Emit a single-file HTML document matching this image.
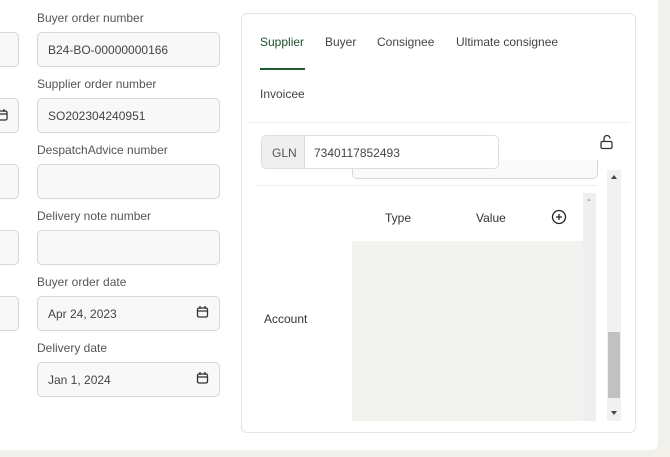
<!DOCTYPE html>
<html><head><style>
*{box-sizing:border-box;margin:0;padding:0}
body{width:670px;height:457px;background:#f1f0eb;position:relative;overflow:hidden;font-family:"Liberation Sans",sans-serif;color:#333}
.a{position:absolute}
.main{left:0;top:0;width:658px;height:450px;background:#fff;border-bottom-right-radius:6px}
.lbl{font-size:12px;color:#555;left:37px}
.inp{left:37px;width:183px;height:35px;border:1px solid #d6d6d6;border-radius:5px;background:#f8f8f8;font-size:12px;color:#444;padding:10px 0 0 10px}
.lp{left:-10px;width:29px;height:35px;border:1px solid #d6d6d6;border-radius:5px;background:#f8f8f8}
.tab{font-size:12px;color:#444;top:35px}
</style></head><body>
<div class="a main"></div>
<div class="a lp" style="top:32px"></div>
<div class="a lp" style="top:98px"></div>
<svg class="a" style="left:0;top:108px" width="10" height="14"><rect x="-3" y="3" width="10" height="9" rx="1.5" fill="none" stroke="#333" stroke-width="1.3"/><line x1="-3" y1="6" x2="7" y2="6" stroke="#333" stroke-width="1.3"/><line x1="4" y1="1" x2="4" y2="4" stroke="#333" stroke-width="1.3"/></svg>
<div class="a lp" style="top:164px"></div>
<div class="a lp" style="top:230px"></div>
<div class="a lp" style="top:296px"></div>

<div class="a lbl" style="top:11px">Buyer order number</div>
<div class="a inp" style="top:32px">B24-BO-00000000166</div>
<div class="a lbl" style="top:77px">Supplier order number</div>
<div class="a inp" style="top:98px">SO202304240951</div>
<div class="a lbl" style="top:143px">DespatchAdvice number</div>
<div class="a inp" style="top:164px"></div>
<div class="a lbl" style="top:209px">Delivery note number</div>
<div class="a inp" style="top:230px"></div>
<div class="a lbl" style="top:275px">Buyer order date</div>
<div class="a inp" style="top:296px">Apr 24, 2023</div>
<div class="a lbl" style="top:341px">Delivery date</div>
<div class="a inp" style="top:362px">Jan 1, 2024</div>
<svg class="a" style="left:196px;top:305px" width="14" height="16"><rect x="1.5" y="3" width="10" height="9" rx="1.5" fill="none" stroke="#333" stroke-width="1.3"/><line x1="1.5" y1="6" x2="11.5" y2="6" stroke="#333" stroke-width="1.3"/><line x1="4" y1="1" x2="4" y2="4" stroke="#333" stroke-width="1.3"/><line x1="9" y1="1" x2="9" y2="4" stroke="#333" stroke-width="1.3"/></svg>
<svg class="a" style="left:196px;top:371px" width="14" height="16"><rect x="1.5" y="3" width="10" height="9" rx="1.5" fill="none" stroke="#333" stroke-width="1.3"/><line x1="1.5" y1="6" x2="11.5" y2="6" stroke="#333" stroke-width="1.3"/><line x1="4" y1="1" x2="4" y2="4" stroke="#333" stroke-width="1.3"/><line x1="9" y1="1" x2="9" y2="4" stroke="#333" stroke-width="1.3"/></svg>

<div class="a" style="left:241px;top:13px;width:395px;height:420px;border:1px solid #e4e4e4;border-radius:6px"></div>
<div class="a tab" style="left:260px;color:#1f4f2c">Supplier</div>
<div class="a tab" style="left:325px">Buyer</div>
<div class="a tab" style="left:377px">Consignee</div>
<div class="a tab" style="left:456px">Ultimate consignee</div>
<div class="a" style="left:260px;top:68px;width:45px;height:2px;background:#1e5a30"></div>
<div class="a tab" style="left:260px;top:87px">Invoicee</div>
<div class="a" style="left:247px;top:122px;width:383px;height:1px;background:#eee"></div>

<div class="a" style="left:352px;top:160px;width:246px;height:19px;border:1px solid #d6d6d6;border-top:none;border-radius:0 0 5px 5px;background:#fafafa"></div>
<div class="a" style="left:261px;top:135px;width:238px;height:34px;border:1px solid #ddd;border-radius:5px;background:#fff;overflow:hidden">
<div class="a" style="left:0;top:0;width:43px;height:34px;background:#efefef;border-right:1px solid #ddd;font-size:12px;color:#555;padding:10px 0 0 10px">GLN</div>
<div class="a" style="left:52px;top:10px;font-size:12px;color:#444">7340117852493</div></div>
<svg class="a" style="left:599px;top:134px" width="16" height="16"><path d="M5 7V4.5a3 3 0 0 1 6 0" fill="none" stroke="#333" stroke-width="1.3"/><rect x="2" y="7.5" width="11" height="7" rx="1.5" fill="none" stroke="#333" stroke-width="1.3"/></svg>
<div class="a" style="left:255px;top:185px;width:343px;height:1px;background:#eee"></div>

<div class="a" style="left:607px;top:170px;width:14px;height:251px;background:#f1f1f1"></div>
<div class="a" style="left:608px;top:332px;width:12px;height:66px;background:#c1c1c1"></div>
<div class="a" style="left:611px;top:175px;width:0;height:0;border:3px solid transparent;border-bottom:4px solid #444;border-top:none"></div>
<div class="a" style="left:611px;top:411px;width:0;height:0;border:3px solid transparent;border-top:4px solid #444;border-bottom:none"></div>

<div class="a" style="left:352px;top:193px;width:244px;height:228px;background:#f2f2ee"></div>
<div class="a" style="left:352px;top:193px;width:231px;height:48px;background:#fff"></div>
<div class="a" style="left:583px;top:193px;width:13px;height:228px;background:#efefef"></div>
<div class="a" style="left:587px;top:198px;width:0;height:0;border:2.5px solid transparent;border-bottom:3px solid #bbb;border-top:none"></div>
<div class="a" style="left:385px;top:211px;font-size:12px;color:#333">Type</div>
<div class="a" style="left:476px;top:211px;font-size:12px;color:#333">Value</div>
<svg class="a" style="left:551px;top:209px" width="16" height="16"><circle cx="8" cy="8" r="6.5" fill="none" stroke="#222" stroke-width="1.3"/><path d="M8 5v6M5 8h6" stroke="#222" stroke-width="1.3"/></svg>
<div class="a" style="left:264px;top:312px;font-size:12px;color:#333">Account</div>
</body></html>
